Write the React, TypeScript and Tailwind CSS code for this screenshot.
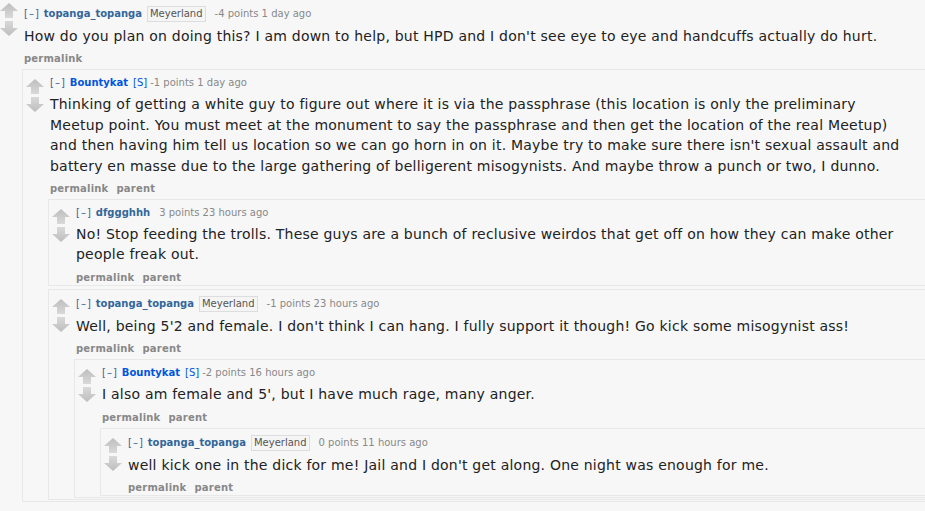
type CommentData = {
  author: string;
  submitter?: boolean;
  flair?: string;
  points: string;
  time: string;
  body: string;
  parent?: boolean;
  replies?: CommentData[];
};

const thread: CommentData = {
  author: "topanga_topanga",
  flair: "Meyerland",
  points: "-4 points",
  time: "1 day ago",
  body: "How do you plan on doing this? I am down to help, but HPD and I don't see eye to eye and handcuffs actually do hurt.",
  replies: [
    {
      author: "Bountykat",
      submitter: true,
      points: "-1 points",
      time: "1 day ago",
      parent: true,
      body: "Thinking of getting a white guy to figure out where it is via the passphrase (this location is only the preliminary Meetup point. You must meet at the monument to say the passphrase and then get the location of the real Meetup) and then having him tell us location so we can go horn in on it. Maybe try to make sure there isn't sexual assault and battery en masse due to the large gathering of belligerent misogynists. And maybe throw a punch or two, I dunno.",
      replies: [
        {
          author: "dfggghhh",
          points: "3 points",
          time: "23 hours ago",
          parent: true,
          body: "No! Stop feeding the trolls. These guys are a bunch of reclusive weirdos that get off on how they can make other people freak out.",
        },
        {
          author: "topanga_topanga",
          flair: "Meyerland",
          points: "-1 points",
          time: "23 hours ago",
          parent: true,
          body: "Well, being 5'2 and female. I don't think I can hang. I fully support it though! Go kick some misogynist ass!",
          replies: [
            {
              author: "Bountykat",
              submitter: true,
              points: "-2 points",
              time: "16 hours ago",
              parent: true,
              body: "I also am female and 5', but I have much rage, many anger.",
              replies: [
                {
                  author: "topanga_topanga",
                  flair: "Meyerland",
                  points: "0 points",
                  time: "11 hours ago",
                  parent: true,
                  body: "well kick one in the dick for me! Jail and I don't get along. One night was enough for me.",
                },
              ],
            },
          ],
        },
      ],
    },
  ],
};

function Arrow({ down }: { down?: boolean }) {
  return (
    <svg width="18" height="15" viewBox="0 0 18 15" className="block">
      <defs>
        <linearGradient id={down ? "gd" : "gu"} x1="0" y1="0" x2="0" y2="1">
          <stop offset="0" stopColor={down ? "#d9d9d9" : "#bdbdbd"} />
          <stop offset="1" stopColor={down ? "#bdbdbd" : "#d9d9d9"} />
        </linearGradient>
      </defs>
      <polygon
        points={down ? "9,15 18,7 13,7 13,0 5,0 5,7 0,7" : "9,0 18,8 13,8 13,15 5,15 5,8 0,8"}
        fill={`url(#${down ? "gd" : "gu"})`}
      />
    </svg>
  );
}

function Comment({ c, top }: { c: CommentData; top?: boolean }) {
  return (
    <div
      className={
        top
          ? "flex"
          : "flex -ml-[2px] mt-[3px] mb-[1px] border-l border-y border-[#e8e8e8] pl-[3px] pt-[6px]"
      }
    >
      <div className="flex flex-col gap-[3px] w-[18px] shrink-0 mt-[3px]">
        <Arrow />
        <Arrow down />
      </div>
      <div className="flex-1 min-w-0 ml-[6px]">
        <div className={`flex items-center text-[10px] leading-[14px] ${top ? "pt-[6px]" : ""}`}>
          <span className="text-[#369] tracking-[1px]">[–]</span>
          <span className={`ml-[4px] font-bold ${c.submitter ? "text-[#0055df]" : "text-[#369]"}`}>{c.author}</span>
          {c.submitter && <span className="ml-[5px] text-[#0055df]">[S]</span>}
          {c.flair && (
            <span className="ml-[5px] border border-[#ddd] bg-[#f5f5f5] px-[2px] leading-[14px] text-[#545454]">
              {c.flair}
            </span>
          )}
          <span className={`${c.submitter ? "ml-[3px]" : "ml-[9px]"} text-[#888]`}>
            {c.points} {c.time}
          </span>
        </div>
        <p className="mt-[4px] pr-[20px] text-[14px] leading-[20.4px] tracking-[0.22px] text-[#222]">{c.body}</p>
        <div className="mt-[6px] flex gap-[8px] text-[10px] leading-[14px] font-bold tracking-[0.2px] text-[#888]">
          <span>permalink</span>
          {c.parent && <span>parent</span>}
        </div>
        {c.replies?.map((r, i) => (
          <Comment key={i} c={r} />
        ))}
      </div>
    </div>
  );
}

export default function App() {
  return (
    <div
      className="w-[925px] h-[511px] overflow-hidden bg-[#f7f7f8]"
      style={{ fontFamily: 'Verdana, "DejaVu Sans", sans-serif' }}
    >
      <Comment c={thread} top />
    </div>
  );
}
